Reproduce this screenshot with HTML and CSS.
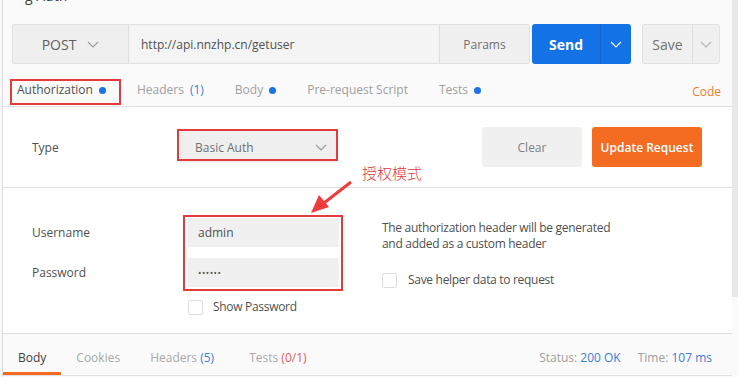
FILE: index.html
```html
<!DOCTYPE html>
<html lang="en">
<head>
    <meta charset="UTF-8">
    <meta name="viewport" content="width=device-width, initial-scale=1.0">
    <title>Basic Auth</title>
    <link rel="stylesheet" href="styles.css">
</head>
<body>
    <div class="app">
        <div class="main">
            <div class="req-name"><span>g Auth</span></div>

            <div class="url-bar">
                <div class="method">
                    <span>POST</span>
                    <svg class="chev" width="12" height="7" viewBox="0 0 12 7"><polyline points="1,1 6,6 11,1" /></svg>
                </div>
                <div class="url">http://api.nnzhp.cn/getuser</div>
                <div class="params">Params</div>
                <div class="send">
                    <span class="send-label">Send</span>
                    <span class="send-more">
                        <svg class="chev chev-white" width="12" height="7" viewBox="0 0 12 7"><polyline points="1,1 6,6 11,1" /></svg>
                    </span>
                </div>
                <div class="save">
                    <span class="save-label">Save</span>
                    <span class="save-more">
                        <svg class="chev chev-light" width="12" height="7" viewBox="0 0 12 7"><polyline points="1,1 6,6 11,1" /></svg>
                    </span>
                </div>
            </div>

            <div class="req-tabs">
                <span class="tab active mark mark-tab">Authorization <i class="dot"></i></span>
                <span class="tab">Headers <span class="count">(1)</span></span>
                <span class="tab">Body <i class="dot"></i></span>
                <span class="tab">Pre-request Script</span>
                <span class="tab">Tests <i class="dot"></i></span>
                <span class="code-link">Code</span>
            </div>

            <div class="auth-panel">
                <div class="type-row">
                    <div class="type-label">Type</div>
                    <div class="select mark mark-select">
                        <span>Basic Auth</span>
                        <svg class="chev" width="12" height="7" viewBox="0 0 12 7"><polyline points="1,1 6,6 11,1" /></svg>
                    </div>
                    <div class="actions">
                        <button class="btn-clear">Clear</button>
                        <button class="btn-update">Update Request</button>
                    </div>
                </div>

                <div class="cred-row">
                    <div class="cred-fields">
                        <div class="cred-pairs">
                            <div class="cred-labels">
                                <label>Username</label>
                                <label>Password</label>
                            </div>
                            <div class="cred-inputs mark mark-inputs">
                                <div class="input">admin</div>
                                <div class="input input-pass">••••••</div>
                            </div>
                        </div>
                        <div class="check-row show-pass">
                            <span class="checkbox"></span>
                            <span>Show Password</span>
                        </div>
                    </div>
                    <div class="cred-help">
                        <p>The authorization header will be generated<br>and added as a custom header</p>
                        <div class="check-row">
                            <span class="checkbox"></span>
                            <span>Save helper data to request</span>
                        </div>
                    </div>
                </div>

                <div class="note">授权模式</div>
                <svg class="note-arrow" width="50" height="40" viewBox="0 0 50 40">
                    <line x1="44" y1="6" x2="17" y2="27" />
                    <polygon points="4,37 22,31 12,19" />
                </svg>
            </div>

            <div class="resp-bar">
                <div class="resp-tabs">
                    <span class="rtab active">Body</span>
                    <span class="rtab">Cookies</span>
                    <span class="rtab">Headers <span class="count">(5)</span></span>
                    <span class="rtab rtab-tests">Tests <span class="fail">(0/1)</span></span>
                </div>
                <div class="resp-meta">
                    <span>Status: <span class="val">200 OK</span></span>
                    <span>Time: <span class="val">107 ms</span></span>
                </div>
            </div>
        </div>
        <div class="scrollbar"><div class="thumb"></div></div>
    </div>
</body>
</html>
```

FILE: styles.css
```css
* {
    margin: 0;
    padding: 0;
    box-sizing: border-box;
    font-family: "Open Sans", "Noto Sans CJK SC", sans-serif;
}

body {
    background-color: #fafafa;
    padding-left: 2px;
    font-size: 12px;
    color: #505050;
    overflow: hidden;
}

.app {
    display: flex;
    height: 377px;
    border-left: 1px solid #dcdcdc;
}

.main {
    flex: 1;
}

.scrollbar {
    width: 6px;
}

.scrollbar .thumb {
    height: 297px;
    background-color: #e8e8e8;
}

/* overlays used for the red annotations */
.mark {
    position: relative;
}

.mark::after {
    content: '';
    position: absolute;
    border: 2px solid #e53a3a;
}

.mark-tab::after {
    top: -3px;
    bottom: -7px;
    left: -7px;
    right: -15px;
}

.mark-select::after {
    top: -2px;
    bottom: 2px;
    left: -3px;
    right: -2px;
}

.mark-inputs::after {
    top: -3px;
    bottom: -4px;
    left: -5px;
    right: -4px;
}

.req-name {
    height: 24px;
    overflow: hidden;
    padding-left: 22px;
}

.req-name span {
    display: block;
    font-size: 14px;
    line-height: 18px;
    margin-top: -13px;
    color: #404040;
}

.chev {
    fill: none;
    stroke: #9a9a9a;
    stroke-width: 1.2;
}

.chev-white {
    stroke: #ffffff;
}

.chev-light {
    stroke: #b5b5b5;
}

/* request url bar */
.url-bar {
    display: flex;
    height: 40px;
    padding-left: 9px;
}

.method {
    width: 116px;
    display: flex;
    align-items: center;
    justify-content: center;
    gap: 11px;
    background-color: #efefef;
    border: 1px solid #e0e0e0;
    border-right: none;
    border-radius: 3px 0 0 3px;
    font-size: 14px;
    color: #606060;
}

.url {
    width: 312px;
    display: flex;
    align-items: center;
    padding-left: 12px;
    background-color: #f4f4f4;
    border: 1px solid #e0e0e0;
    color: #505050;
}

.params {
    width: 90px;
    display: flex;
    align-items: center;
    justify-content: center;
    background-color: #f0f0f0;
    border: 1px solid #e0e0e0;
    border-left: none;
    border-radius: 0 3px 3px 0;
    color: #707070;
}

.send {
    width: 99px;
    margin-left: 2px;
    display: flex;
    background-color: #1373e6;
    border-radius: 3px;
    color: #ffffff;
}

.send-label {
    width: 68px;
    display: flex;
    align-items: center;
    justify-content: center;
    font-size: 14px;
    font-weight: 700;
}

.send-more {
    flex: 1;
    display: flex;
    align-items: center;
    justify-content: center;
    border-left: 1px solid #0f66cc;
}

.save {
    width: 78px;
    margin-left: 11px;
    display: flex;
    background-color: #f0f0f0;
    border: 1px solid #e0e0e0;
    border-radius: 3px;
    color: #707070;
}

.save-label {
    width: 49px;
    display: flex;
    align-items: center;
    justify-content: center;
    font-size: 14px;
}

.save-more {
    flex: 1;
    display: flex;
    align-items: center;
    justify-content: center;
    border-left: 1px solid #e0e0e0;
}

/* request tabs */
.req-tabs {
    display: flex;
    align-items: flex-start;
    gap: 31px;
    height: 43px;
    padding: 18px 11px 0 14px;
    border-bottom: 1px solid #e0e0e0;
    line-height: 16px;
}

.tab {
    display: flex;
    align-items: center;
    gap: 6px;
    color: #a0a0a0;
}

.tab.active {
    color: #505050;
}

.count {
    color: #3b7fd4;
}

.dot {
    display: inline-block;
    width: 7px;
    height: 7px;
    border-radius: 50%;
    background-color: #1a73e8;
}

.code-link {
    margin-left: auto;
    color: #f47a2e;
    padding-top: 2px;
}

/* authorization panel */
.auth-panel {
    position: relative;
    background-color: #ffffff;
    border-bottom: 1px solid #e0e0e0;
}

.type-row {
    display: flex;
    align-items: center;
    height: 81px;
    padding: 0 30px 0 29px;
    border-bottom: 1px solid #e0e0e0;
}

.type-label {
    width: 148px;
}

.select {
    width: 156px;
    height: 32px;
    display: flex;
    align-items: center;
    justify-content: space-between;
    padding: 0 9px 0 15px;
    background-color: #efefef;
    color: #707070;
}

.actions {
    margin-left: auto;
    display: flex;
    gap: 10px;
}

.actions button {
    height: 40px;
    border: none;
    border-radius: 3px;
    font-size: 12px;
}

.btn-clear {
    width: 100px;
    background-color: #f0f0f0;
    color: #808080;
}

.btn-update {
    width: 110px;
    background-color: #f46c22;
    color: #ffffff;
    font-weight: 600;
}

.cred-row {
    display: flex;
    height: 145px;
    padding-left: 29px;
}

.cred-pairs {
    display: flex;
    padding-top: 30px;
}

.cred-labels,
.cred-inputs {
    display: flex;
    flex-direction: column;
    gap: 11px;
}

.cred-labels {
    width: 156px;
}

.cred-labels label {
    height: 29px;
    line-height: 29px;
}

.input {
    width: 151px;
    height: 29px;
    line-height: 29px;
    padding-left: 10px;
    background-color: #f0f0f0;
}

.input-pass {
    font-size: 9px;
    letter-spacing: 0.5px;
}

.check-row {
    display: flex;
    align-items: center;
    gap: 10px;
    line-height: 16px;
}

.show-pass {
    margin-top: 12px;
    padding-left: 156px;
    letter-spacing: -0.3px;
}

.checkbox {
    width: 15px;
    height: 15px;
    border: 1px solid #dddddd;
    border-radius: 2px;
    background-color: #ffffff;
}

.cred-help {
    margin-left: 43px;
    padding-top: 32px;
    letter-spacing: -0.3px;
}

.cred-help p {
    line-height: 16px;
    margin-bottom: 20px;
}

.cred-help .check-row {
    gap: 11px;
}

.note {
    position: absolute;
    left: 359px;
    top: 56px;
    font-size: 15px;
    line-height: 20px;
    color: #e0393b;
    font-family: "Noto Sans CJK SC", sans-serif;
    font-weight: 300;
}

.note-arrow {
    position: absolute;
    left: 304px;
    top: 69px;
}

.note-arrow line {
    stroke: #ef3b3b;
    stroke-width: 3;
}

.note-arrow polygon {
    fill: #ef3b3b;
}

/* response bar */
.resp-bar {
    display: flex;
    height: 42px;
    border-bottom: 1px solid #e0e0e0;
    line-height: 16px;
}

.resp-tabs {
    display: flex;
}

.rtab {
    padding: 16px 15px 0;
    height: 41px;
    color: #a8a8a8;
}

.rtab.active {
    color: #404040;
    border-bottom: 3px solid #f26b21;
}

.rtab-tests {
    margin-left: 5px;
}

.fail {
    color: #e25b5b;
}

.resp-meta {
    margin-left: auto;
    display: flex;
    gap: 17px;
    padding: 16px 20px 0 0;
    color: #a0a0a0;
}

.resp-meta .val {
    color: #3a7bd5;
}
```
